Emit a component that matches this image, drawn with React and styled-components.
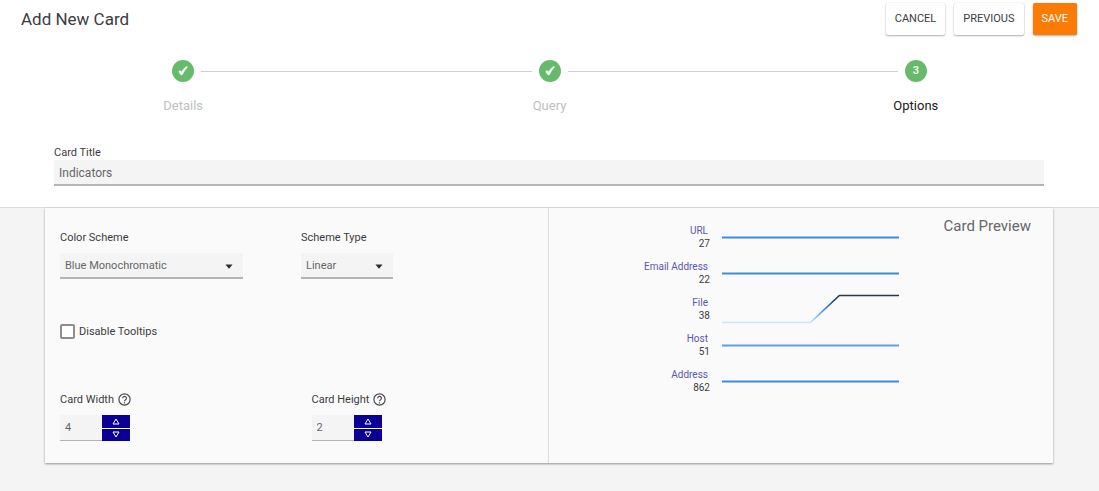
import { useId, useState } from "react";
import styled, { createGlobalStyle, ThemeProvider } from "styled-components";

const theme = {
  color: {
    text: "#3c3c40",
    muted: "#66666a",
    disabled: "#c0c0c0",
    page: "#f4f4f4",
    panel: "#fafafa",
    field: "#f4f4f4",
    line: "#dcdcdc",
    underline: "#b4b4b4",
    green: "#66bb6a",
    orange: "#fb7b04",
    navy: "#0a0096",
    link: "#5c56ae",
  },
};

const GlobalStyle = createGlobalStyle`
  * {
    box-sizing: border-box;
  }
  body {
    margin: 0;
    background-color: ${theme.color.page};
    color: ${theme.color.text};
    font-family: Roboto, "Liberation Sans", sans-serif;
    font-size: 11px;
    line-height: 14px;
  }
  button, input, select {
    font: inherit;
    color: inherit;
    margin: 0;
  }
`;

const TopSection = styled.header`
  background-color: white;
  border-bottom: 1px solid ${({ theme }) => theme.color.line};
  padding-bottom: 21px;
`;

const TitleBar = styled.div`
  display: flex;
  align-items: center;
  justify-content: space-between;
  padding: 3px 22px 0 21px;
`;

const Title = styled.h1`
  margin: 0;
  font-size: 17px;
  font-weight: 400;
  line-height: 24px;
`;

const Actions = styled.div`
  display: flex;
  gap: 9px;
`;

const ActionButton = styled.button`
  height: 32px;
  padding: 0 9px;
  border: none;
  border-radius: 2px;
  font-size: 11px;
  cursor: pointer;
  color: ${({ $primary, theme }) => ($primary ? "white" : theme.color.text)};
  background-color: ${({ $primary, theme }) =>
    $primary ? theme.color.orange : "white"};
  box-shadow: 0 1px 2px rgba(0, 0, 0, 0.3), 0 0 1px rgba(0, 0, 0, 0.2);
`;

const StepList = styled.ol`
  display: grid;
  grid-template-columns: repeat(3, 1fr);
  margin: 25px 0 0;
  padding: 0;
  list-style: none;
`;

const Step = styled.li`
  display: flex;
  flex-direction: column;
  align-items: center;
  gap: 16px;
  font-size: 13px;
  line-height: 16px;
  color: ${({ $active, theme }) => ($active ? "#202024" : theme.color.disabled)};
`;

const StepTrack = styled.div`
  display: flex;
  align-items: center;
  width: 100%;
  gap: 7px;
`;

const StepLine = styled.span`
  flex: 1;
  height: 1px;
  background-color: ${({ $hidden }) => ($hidden ? "transparent" : "#cfcfcf")};
`;

const StepCircle = styled.span`
  display: flex;
  align-items: center;
  justify-content: center;
  width: 22px;
  height: 22px;
  border-radius: 50%;
  color: white;
  font-size: 11px;
  font-weight: 500;
  background-color: ${({ theme }) => theme.color.green};
`;

const TitleField = styled.div`
  display: flex;
  flex-direction: column;
  margin: 32px 55px 0 54px;
`;

const TextInput = styled.input`
  width: 100%;
  height: 26px;
  padding: 1px 5px 0;
  border: none;
  border-bottom: 2px solid ${({ theme }) => theme.color.underline};
  border-radius: 0;
  font-size: 12px;
  color: ${({ theme }) => theme.color.muted};
  background-color: ${({ theme }) => theme.color.field};
`;

const Panel = styled.main`
  display: grid;
  grid-template-columns: 1fr 1fr;
  margin: 0 46px 28px 45px;
  background-color: ${({ theme }) => theme.color.panel};
  box-shadow: 0 1px 2px rgba(0, 0, 0, 0.4);
`;

const Settings = styled.section`
  padding: 23px 0 22px;
  border-right: 1px solid ${({ theme }) => theme.color.line};
`;

const SelectRow = styled.div`
  display: flex;
  gap: 58px;
  padding-left: 15px;
`;

const Field = styled.div`
  display: flex;
  flex-direction: column;
  gap: 8px;
`;

const SelectBox = styled.div`
  position: relative;
  width: ${({ $width }) => $width}px;
  svg {
    position: absolute;
    top: 11px;
    right: 10px;
    pointer-events: none;
  }
`;

const Select = styled.select`
  width: 100%;
  height: 26px;
  padding: 2px 5px 0;
  appearance: none;
  border: none;
  border-bottom: 2px solid ${({ theme }) => theme.color.underline};
  border-radius: 0;
  color: ${({ theme }) => theme.color.muted};
  background-color: ${({ theme }) => theme.color.field};
`;

const CheckLabel = styled.label`
  display: flex;
  width: fit-content;
  align-items: center;
  gap: 4px;
  margin: 45px 0 0 15px;
`;

const Checkbox = styled.input`
  appearance: none;
  width: 15px;
  height: 15px;
  border: 2px solid #8e8e92;
  border-radius: 2px;
  background-color: white;
  &:checked {
    background-color: ${({ theme }) => theme.color.navy};
  }
`;

const SizeRow = styled.div`
  display: grid;
  grid-template-columns: 1fr 1fr;
  margin-top: 54px;
  > div {
    padding-left: 15px;
  }
`;

const HelpLabel = styled.div`
  display: flex;
  align-items: center;
  gap: 4px;
`;

const Spinner = styled.div`
  display: flex;
  height: 26px;
`;

const NumberInput = styled.input`
  width: 42px;
  padding: 0 5px;
  appearance: textfield;
  border: none;
  border-bottom: 1px solid ${({ theme }) => theme.color.underline};
  border-radius: 0;
  color: ${({ theme }) => theme.color.muted};
  background-color: ${({ theme }) => theme.color.field};
  &::-webkit-inner-spin-button {
    display: none;
  }
`;

const SpinnerButtons = styled.div`
  display: flex;
  flex-direction: column;
  gap: 1px;
  width: 28px;
`;

const SpinnerButton = styled.button`
  display: flex;
  flex: 1;
  align-items: center;
  justify-content: center;
  padding: 0;
  border: none;
  background-color: ${({ theme }) => theme.color.navy};
  cursor: pointer;
`;

const Preview = styled.section`
  display: flex;
  align-items: flex-start;
  justify-content: space-between;
  padding: 8px 22px 0 62px;
`;

const PreviewTitle = styled.h2`
  margin: 0;
  font-size: 15px;
  font-weight: 400;
  line-height: 20px;
  color: ${({ theme }) => theme.color.muted};
`;

const IndicatorList = styled.ul`
  flex: 1;
  max-width: 288px;
  margin: 0;
  padding: 8px 0 0;
  list-style: none;
`;

const Indicator = styled.li`
  display: grid;
  grid-template-columns: 99px 1fr;
  gap: 12px;
  height: 36px;
`;

const IndicatorText = styled.div`
  display: flex;
  flex-direction: column;
  align-items: flex-end;
  font-size: 10px;
  line-height: 13px;
`;

const IndicatorLink = styled.a`
  padding-right: 2px;
  text-decoration: none;
  white-space: nowrap;
  color: ${({ theme }) => theme.color.link};
`;

const Sparkline = styled.svg`
  display: block;
  width: 100%;
  height: 32px;
  overflow: visible;
`;

const steps = ["Details", "Query", "Options"];

const indicators = [
  { name: "URL", value: 27, color: "#3d8bdc" },
  { name: "Email Address", value: 22, color: "#3d8bdc" },
  { name: "File", value: 38, rising: true },
  { name: "Host", value: 51, color: "#5f9fe2" },
  { name: "Address", value: 862, color: "#3d8bdc" },
];

function CheckMark() {
  return (
    <svg width="10" height="10" viewBox="0 0 10 10" aria-hidden="true">
      <path
        d="M.8 5.300C1.300 4.500 2.500 4.400 3 5.200l.5.9C4.700 4 6.300 2 8.200.7c.7-.4 1.500 0 1.100.8C7.300 3.400 5.700 6 4.500 8.500c-.4.7-1.500.8-1.900.1C1.900 7.700 1.200 6.600.8 5.300Z"
        fill="white"
        stroke="white"
        strokeWidth=".5"
        strokeLinejoin="round"
      />
    </svg>
  );
}

function HelpIcon() {
  return (
    <svg
      width="13"
      height="14"
      viewBox="0 0 13 14"
      fill="none"
      stroke="#4a4a4e"
      strokeWidth="1.2"
      aria-hidden="true"
    >
      <circle cx="6.5" cy="6.5" r="5.6" />
      <path d="M4.600 5.300a1.900 1.900 0 1 1 3 1.500C6.900 7.300 6.500 7.600 6.500 8.300M6.500 9.200v1.200" />
    </svg>
  );
}

function SelectField({ label, options, width }) {
  const id = useId();
  return (
    <Field>
      <label htmlFor={id}>{label}</label>
      <SelectBox $width={width}>
        <Select id={id}>
          {options.map((option) => (
            <option key={option}>{option}</option>
          ))}
        </Select>
        <svg width="8" height="5" viewBox="0 0 8 5" aria-hidden="true">
          <path d="M.5.5h7L4.500 4.200a.8.8 0 0 1-1 0Z" fill="#2c2c30" />
        </svg>
      </SelectBox>
    </Field>
  );
}

function NumberField({ label, initial }) {
  const id = useId();
  const [value, setValue] = useState(initial);

  return (
    <Field>
      <HelpLabel>
        <label htmlFor={id}>{label}</label>
        <HelpIcon />
      </HelpLabel>
      <Spinner>
        <NumberInput
          id={id}
          type="number"
          value={value}
          onChange={(e) => setValue(Number(e.target.value))}
        />
        <SpinnerButtons>
          <SpinnerButton
            aria-label={`Increase ${label}`}
            onClick={() => setValue(value + 1)}
          >
            <svg width="8" height="7" viewBox="0 0 8 7" aria-hidden="true">
              <path d="M4 1 7 6H1Z" fill="none" stroke="white" />
            </svg>
          </SpinnerButton>
          <SpinnerButton
            aria-label={`Decrease ${label}`}
            onClick={() => setValue(value - 1)}
          >
            <svg width="8" height="7" viewBox="0 0 8 7" aria-hidden="true">
              <path d="M4 6 7 1H1Z" fill="none" stroke="white" />
            </svg>
          </SpinnerButton>
        </SpinnerButtons>
      </Spinner>
    </Field>
  );
}

function IndicatorChart({ color, rising }) {
  if (!rising) {
    return (
      <Sparkline viewBox="0 0 178 32" preserveAspectRatio="none">
        <path d="M0 13.500H178" stroke={color} strokeWidth="1.800" />
      </Sparkline>
    );
  }
  return (
    <Sparkline viewBox="0 0 178 32" preserveAspectRatio="none">
      <defs>
        <linearGradient
          id="rise"
          gradientUnits="userSpaceOnUse"
          x1="0"
          y1="27"
          x2="0"
          y2="-1"
        >
          <stop offset="0" stopColor="#d3e7fa" />
          <stop offset="0.2" stopColor="#90c2f5" />
          <stop offset="0.5" stopColor="#3287e0" />
          <stop offset="0.8" stopColor="#1d4570" />
          <stop offset="1" stopColor="#2f3540" />
        </linearGradient>
      </defs>
      <path
        d="M0 26.500H89L118-.5H178"
        fill="none"
        stroke="url(#rise)"
        strokeWidth="1.700"
        strokeLinejoin="round"
      />
    </Sparkline>
  );
}

function App() {
  const [title, setTitle] = useState("Indicators");
  const current = 2;

  return (
    <ThemeProvider theme={theme}>
      <GlobalStyle />
      <TopSection>
        <TitleBar>
          <Title>Add New Card</Title>
          <Actions>
            <ActionButton>CANCEL</ActionButton>
            <ActionButton>PREVIOUS</ActionButton>
            <ActionButton $primary>SAVE</ActionButton>
          </Actions>
        </TitleBar>
        <StepList>
          {steps.map((step, index) => (
            <Step key={step} $active={index === current}>
              <StepTrack>
                <StepLine $hidden={index === 0} />
                <StepCircle>
                  {index < current ? <CheckMark /> : index + 1}
                </StepCircle>
                <StepLine $hidden={index === steps.length - 1} />
              </StepTrack>
              {step}
            </Step>
          ))}
        </StepList>
        <TitleField>
          <label htmlFor="card-title">Card Title</label>
          <TextInput
            id="card-title"
            type="text"
            value={title}
            onChange={(e) => setTitle(e.target.value)}
          />
        </TitleField>
      </TopSection>
      <Panel>
        <Settings>
          <SelectRow>
            <SelectField
              label="Color Scheme"
              options={["Blue Monochromatic"]}
              width={183}
            />
            <SelectField
              label="Scheme Type"
              options={["Linear", "Ordinal"]}
              width={92}
            />
          </SelectRow>
          <CheckLabel>
            <Checkbox type="checkbox" />
            Disable Tooltips
          </CheckLabel>
          <SizeRow>
            <NumberField label="Card Width" initial={4} />
            <NumberField label="Card Height" initial={2} />
          </SizeRow>
        </Settings>
        <Preview>
          <IndicatorList>
            {indicators.map(({ name, value, color, rising }) => (
              <Indicator key={name}>
                <IndicatorText>
                  <IndicatorLink href="#">{name}</IndicatorLink>
                  <span>{value}</span>
                </IndicatorText>
                <IndicatorChart color={color} rising={rising} />
              </Indicator>
            ))}
          </IndicatorList>
          <PreviewTitle>Card Preview</PreviewTitle>
        </Preview>
      </Panel>
    </ThemeProvider>
  );
}

export default App;
